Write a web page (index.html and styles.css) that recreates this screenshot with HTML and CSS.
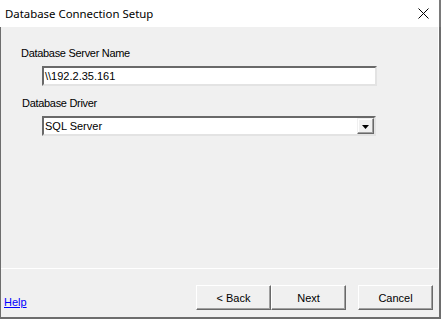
FILE: index.html
```html
<!DOCTYPE html>
<html>
<head>
<meta charset="utf-8">
<link rel="stylesheet" href="styles.css">
</head>
<body>
<div class="window">
  <div class="titlebar">
    <span class="title">Database Connection Setup</span>
    <svg class="close" width="11" height="11" viewBox="0 0 11 11"><path d="M0.5 0.5 L10.5 10.5 M10.5 0.5 L0.5 10.5" stroke="#000" stroke-width="1" fill="none"/></svg>
  </div>
  <div class="client">
    <div class="panel">
      <div class="label">Database Server Name</div>
      <div class="field textbox">\\192.2.35.161</div>
      <div class="label label2">Database Driver</div>
      <div class="field combo">
        <span class="combo-text">SQL Server</span>
        <span class="drop"><svg width="7" height="4" viewBox="0 0 7 4"><path d="M0 0 H7 L3.5 4 Z" fill="#000"/></svg></span>
      </div>
    </div>
    <div class="footer">
      <a class="help" href="#">Help</a>
      <div class="buttons">
        <div class="btn">&lt; Back</div>
        <div class="btn">Next</div>
        <div class="btn cancel">Cancel</div>
      </div>
    </div>
  </div>
</div>
</body>
</html>
```

FILE: styles.css
```css
html, body {
  margin: 0;
  padding: 0;
  background: #f0f0f0;
}
.window {
  width: 441px;
  height: 319px;
  display: flex;
  flex-direction: column;
  font-family: "Liberation Sans", Arial, sans-serif;
  font-size: 11px;
  color: #000;
  box-sizing: border-box;
}
.titlebar {
  height: 27px;
  flex: none;
  background: #fff;
  display: flex;
  align-items: center;
  justify-content: space-between;
  padding: 0 10px 0 5px;
  border-right: 2px solid #7a7a7a;
  box-sizing: border-box;
}
.title {
  font-family: "Noto Sans", sans-serif;
  font-size: 11.4px;
  margin-top: -1px;
}
.close {
  display: block;
  margin-top: -1px;
}
.client {
  flex: 1;
  display: flex;
  flex-direction: column;
  border-left: 1px solid #6d6d6d;
  border-right: 2px solid #6d6d6d;
  border-bottom: 2px solid #6d6d6d;
  background: #f0f0f0;
}
.panel {
  height: 242px;
  box-sizing: border-box;
  border-bottom: 1px solid #fff;
  border-right: 1px solid #fff;
  padding: 20px 0 0 20px;
}
.label {
  line-height: 13px;
  height: 13px;
  letter-spacing: -0.3px;
}
.label2 {
  margin-top: 11px;
  padding-left: 1px;
}
.field {
  margin-top: 6px;
  margin-left: 21px;
  width: 335px;
  height: 20px;
  box-sizing: border-box;
  background: #fff;
  border-top: 2px solid #696969;
  border-left: 2px solid #696969;
  border-right: 2px solid #e3e3e3;
  border-bottom: 2px solid #e3e3e3;
  line-height: 16px;
  padding-left: 1px;
}
.combo {
  width: 334px;
  display: flex;
  justify-content: space-between;
}
.drop {
  width: 17px;
  height: 16px;
  box-sizing: border-box;
  background: #f0f0f0;
  border-top: 1px solid #f0f0f0;
  border-left: 1px solid #f0f0f0;
  border-right: 1px solid #696969;
  border-bottom: 1px solid #696969;
  box-shadow: inset -1px -1px 0 #a0a0a0, inset 1px 1px 0 #fff;
  display: flex;
  align-items: center;
  justify-content: center;
}
.drop svg { display: block; margin-top: 1px; }
.footer {
  flex: 1;
  display: flex;
  justify-content: space-between;
  align-items: flex-end;
  padding: 0 6px 7px 3px;
}
.help {
  color: #0000ff;
  text-decoration: underline;
  line-height: 13px;
  margin-bottom: 1px;
}
.buttons {
  display: flex;
}
.btn {
  width: 75px;
  height: 25px;
  box-sizing: border-box;
  background: #f0f0f0;
  border-top: 1px solid #fff;
  border-left: 1px solid #fff;
  border-right: 1px solid #696969;
  border-bottom: 1px solid #696969;
  box-shadow: inset -1px -1px 0 #a0a0a0;
  display: flex;
  align-items: center;
  justify-content: center;
}
.cancel {
  margin-left: 12px;
}
```
